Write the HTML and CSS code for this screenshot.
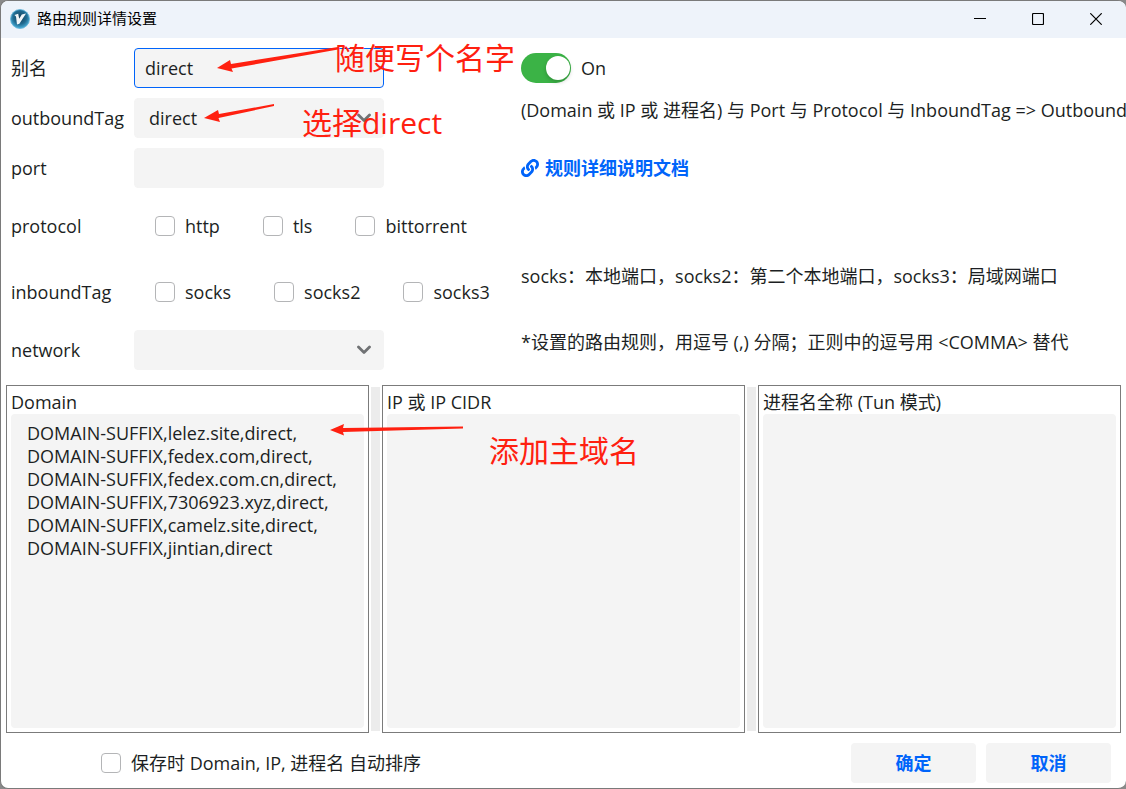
FILE: index.html
```html
<!DOCTYPE html>
<html lang="zh-CN">
<head>
  <meta charset="UTF-8">
  <title>路由规则详情设置</title>
  <meta name="viewport" content="width=device-width, initial-scale=1.0">
  <link rel="stylesheet" href="styles.css">
</head>
<body>
  <div class="window">
    <!-- TITLE BAR -->
    <header class="titlebar">
      <svg class="logo" viewBox="0 0 20 20">
        <defs>
          <radialGradient id="ball" cx="50%" cy="42%" r="58%">
            <stop offset="0" stop-color="#173f57" />
            <stop offset="0.6" stop-color="#1f6a90" />
            <stop offset="1" stop-color="#4bb0da" />
          </radialGradient>
        </defs>
        <circle cx="10" cy="10" r="9.5" fill="url(#ball)" stroke="#63b4d8" stroke-width="0.8" />
        <path d="M4.4 6 L8.2 4.8 L9.2 9.8 L11.8 5.6 L16 4.4 L9.4 14.8 L7 15.4 L6 7.6 Z" fill="#f0f5f8" />
      </svg>
      <h1>路由规则详情设置</h1>
      <div class="window-buttons">
        <button type="button" aria-label="最小化">
          <svg viewBox="0 0 12 12"><path d="M0 5.5h12" /></svg>
        </button>
        <button type="button" aria-label="最大化">
          <svg viewBox="0 0 12 12"><rect x="0.5" y="0.5" width="11" height="11" rx="1" /></svg>
        </button>
        <button type="button" aria-label="关闭">
          <svg viewBox="0 0 12 12"><path d="M0.3 0.3l11.4 11.4M11.7 0.3L0.3 11.7" /></svg>
        </button>
      </div>
    </header>

    <!-- RULE FORM -->
    <form class="rule-form">
      <div class="fields">
        <label for="remarks">别名</label>
        <input type="text" class="box focused" id="remarks" value="direct">
        <label class="toggle"><input type="checkbox" checked>On</label>

        <label for="outboundTag">outboundTag</label>
        <select class="box" id="outboundTag"><option>direct</option></select>
        <p>(Domain 或 IP 或 进程名) 与 Port 与 Protocol 与 InboundTag =&gt; OutboundTag</p>

        <label for="port">port</label>
        <input type="text" class="box" id="port">
        <a href="#" class="doc-link">
          <svg viewBox="0 0 512 512"><path d="M326.612 185.391c59.747 59.809 58.927 155.698.36 214.59-.11.12-.24.25-.36.37l-67.2 67.2c-59.27 59.27-155.699 59.262-214.96 0-59.27-59.26-59.27-155.7 0-214.96l37.106-37.106c9.84-9.84 26.786-3.3 27.294 10.606.648 17.722 3.826 35.527 9.69 52.721 1.986 5.822.567 12.262-3.783 16.612l-13.087 13.087c-28.026 28.026-28.905 73.66-1.155 101.96 28.024 28.579 74.086 28.749 102.325.51l67.2-67.19c28.191-28.191 28.073-73.757 0-101.83-3.701-3.694-7.429-6.564-10.341-8.569a16.037 16.037 0 0 1-6.947-12.606c-.396-10.567 3.348-21.456 11.698-29.806l21.054-21.055c5.521-5.521 14.182-6.199 20.584-1.731a152.482 152.482 0 0 1 20.522 17.197zM467.547 44.449c-59.261-59.262-155.69-59.27-214.96 0l-67.2 67.2c-.12.12-.25.25-.36.37-58.566 58.892-59.387 154.781.36 214.59a152.454 152.454 0 0 0 20.521 17.196c6.402 4.468 15.064 3.789 20.584-1.731l21.054-21.055c8.35-8.35 12.094-19.239 11.698-29.806a16.037 16.037 0 0 0-6.947-12.606c-2.912-2.005-6.64-4.875-10.341-8.569-28.073-28.073-28.191-73.639 0-101.83l67.2-67.19c28.239-28.239 74.3-28.069 102.325.51 27.75 28.3 26.872 73.934-1.155 101.96l-13.087 13.087c-4.35 4.35-5.769 10.79-3.783 16.612 5.864 17.194 9.042 34.999 9.69 52.721.509 13.906 17.454 20.446 27.294 10.606l37.106-37.106c59.271-59.259 59.271-155.699.001-214.959z" /></svg>
          规则详细说明文档
        </a>

        <span>protocol</span>
        <div class="checks">
          <label class="check"><input type="checkbox">http</label>
          <label class="check"><input type="checkbox">tls</label>
          <label class="check"><input type="checkbox">bittorrent</label>
        </div>
        <span></span>

        <span>inboundTag</span>
        <div class="checks">
          <label class="check"><input type="checkbox">socks</label>
          <label class="check"><input type="checkbox">socks2</label>
          <label class="check"><input type="checkbox">socks3</label>
        </div>
        <p>socks：本地端口，socks2：第二个本地端口，socks3：局域网端口</p>

        <label for="network">network</label>
        <select class="box" id="network"><option></option></select>
        <p>*设置的路由规则，用逗号 (,) 分隔；正则中的逗号用 &lt;COMMA&gt; 替代</p>
      </div>

      <!-- RULE LISTS -->
      <div class="panels">
        <section class="panel">
          <label for="domain">Domain</label>
          <textarea id="domain" spellcheck="false">DOMAIN-SUFFIX,lelez.site,direct,
DOMAIN-SUFFIX,fedex.com,direct,
DOMAIN-SUFFIX,fedex.com.cn,direct,
DOMAIN-SUFFIX,7306923.xyz,direct,
DOMAIN-SUFFIX,camelz.site,direct,
DOMAIN-SUFFIX,jintian,direct</textarea>
        </section>
        <div class="splitter"></div>
        <section class="panel">
          <label for="ip">IP 或 IP CIDR</label>
          <textarea id="ip"></textarea>
        </section>
        <div class="splitter"></div>
        <section class="panel">
          <label for="process">进程名全称 (Tun 模式)</label>
          <textarea id="process"></textarea>
        </section>
      </div>

      <footer class="actions">
        <label class="check"><input type="checkbox">保存时 Domain, IP, 进程名 自动排序</label>
        <button type="button">确定</button>
        <button type="button">取消</button>
      </footer>
    </form>

    <!-- red notes drawn over the form -->
    <svg class="arrows" width="480" height="450" viewBox="0 0 480 450">
      <path d="M338 47 L231 64 L230 60 L217 68 L233 72 L231.500 68.500 L338 49.500 Z" />
      <path d="M274 104 L219 114 L218 110 L204 118 L220 122 L218.500 118 L274 106 Z" />
      <path d="M463 426.500 L343 428 L344 424 L330 430 L344 435.500 L343 432 L463 428.500 Z" />
    </svg>
    <span class="note note-name">随便写个名字</span>
    <span class="note note-tag">选择direct</span>
    <span class="note note-domain">添加主域名</span>
  </div>
</body>
</html>
```
FILE: styles.css
```css
* {
  box-sizing: border-box;
}
body {
  margin: 0;
  background: #8a8a8a;
  font-family: 'Open Sans', 'Noto Sans CJK SC', sans-serif;
  font-size: 18px;
  line-height: 23px;
  color: #1c1f23;
}
input, select, textarea, button {
  font: inherit;
  color: inherit;
  margin: 0;
}
.window {
  position: relative;
  display: flex;
  flex-direction: column;
  min-height: 100vh;
  background: #fff;
  border: 1px solid #7a7a7a;
  border-right: none;
  border-radius: 8px;
  overflow: hidden;
}

/* title bar */
.titlebar {
  display: flex;
  align-items: flex-start;
  height: 37px;
  padding-left: 9px;
  background: #eef3fa;
  color: #000;
}
.logo {
  width: 20px;
  height: 20px;
  margin: 8px 7px 0 0;
}
.titlebar h1 {
  margin: 0;
  font-size: 15px;
  font-weight: normal;
  line-height: 35px;
}
.window-buttons {
  display: flex;
  margin-left: auto;
  padding-right: 1px;
}
.window-buttons button {
  display: flex;
  align-items: center;
  justify-content: center;
  width: 58px;
  height: 36px;
  padding: 0;
  border: none;
  background: none;
}
.window-buttons svg {
  width: 12px;
  height: 12px;
  fill: none;
  stroke: #000;
  stroke-width: 1.2;
}

/* form */
.rule-form {
  display: flex;
  flex-direction: column;
  flex: 1;
  padding: 10px 5px 5px;
}
.fields {
  display: grid;
  grid-template-columns: 113px 377px minmax(0, 1fr);
  grid-template-rows: 40px 40px 40px 56px 56px 40px;
  gap: 10px;
  align-items: center;
  margin: 0 -5px 15px 5px;
}
.fields p {
  align-self: start;
  margin: 0;
  padding-top: 1px;
  white-space: nowrap;
}
.box {
  width: 250px;
  height: 40px;
  padding: 0 10px;
  border: 1px solid #f4f4f4;
  border-radius: 4px;
  background: #f4f4f4;
  outline: none;
}
.box.focused {
  border-color: #0064fa;
}
select.box {
  appearance: none;
  padding: 0 14px;
  background: #f4f4f4 url("data:image/svg+xml,%3Csvg xmlns='http://www.w3.org/2000/svg' width='14' height='10' viewBox='0 0 14 10' fill='none' stroke='%23707274' stroke-width='2.8' stroke-linecap='round' stroke-linejoin='round'%3E%3Cpath d='M1.5 2l5.5 5.5L12.5 2'/%3E%3C/svg%3E") no-repeat right 12px center;
}
.checks {
  display: flex;
  gap: 43px;
  padding-left: 21px;
}
.check {
  display: flex;
  align-items: center;
  gap: 10px;
}
.check input {
  appearance: none;
  width: 20px;
  height: 20px;
  border: 1px solid #b4b5b7;
  border-radius: 4px;
  background: #fff;
}
.toggle {
  display: flex;
  align-items: center;
  gap: 10px;
}
.toggle input {
  appearance: none;
  display: flex;
  align-items: center;
  justify-content: flex-end;
  width: 50px;
  height: 30px;
  padding-right: 1px;
  border-radius: 15px;
  background: #3bb346;
}
.toggle input::before {
  content: "";
  width: 24px;
  height: 24px;
  border-radius: 50%;
  background: #fff;
  box-shadow: 0 2px 4px rgba(0, 0, 0, 0.2);
}
.doc-link {
  display: flex;
  align-items: center;
  gap: 6px;
  color: #0064fa;
  font-weight: bold;
  text-decoration: none;
}
.doc-link svg {
  width: 18px;
  height: 18px;
  fill: currentColor;
}

/* rule lists */
.panels {
  display: flex;
  flex: 1;
  gap: 2px;
}
.panel {
  display: flex;
  flex: 1;
  flex-direction: column;
  min-width: 0;
  padding: 5px 4px 4px;
  border: 1px solid #7b7b7b;
}
.panel textarea {
  flex: 1;
  width: 100%;
  padding: 8px 16px;
  border: none;
  border-radius: 4px;
  background: #f4f4f4;
  outline: none;
  resize: none;
}
.splitter {
  width: 9px;
  margin: 2px 0;
  background: #ececec;
}

.actions {
  display: flex;
  gap: 10px;
  padding: 10px 10px 0 95px;
}
.actions .check {
  margin-right: auto;
}
.actions button {
  width: 125px;
  height: 40px;
  border: none;
  border-radius: 4px;
  background: #f4f4f4;
  color: #0064fa;
  font-weight: bold;
}

/* notes */
.arrows {
  position: absolute;
  top: -1px;
  left: -1px;
  fill: #ff2010;
  pointer-events: none;
}
.note {
  position: absolute;
  color: #ff2010;
  font-size: 30px;
  line-height: 40px;
  white-space: nowrap;
  pointer-events: none;
}
.note-name {
  top: 37px;
  left: 334px;
}
.note-tag {
  top: 102px;
  left: 301px;
}
.note-domain {
  top: 430px;
  left: 488px;
}
```
